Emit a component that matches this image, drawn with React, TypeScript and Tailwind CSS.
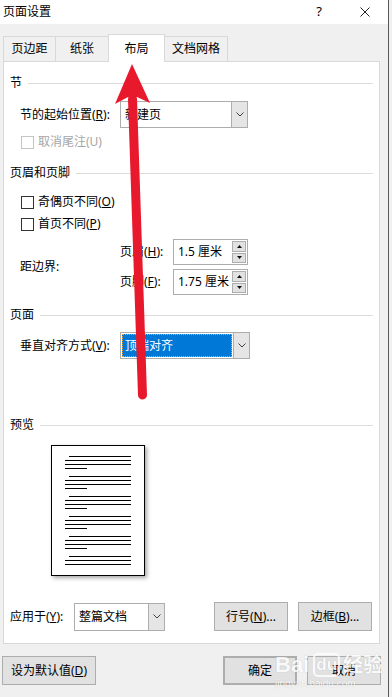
import type { ReactNode } from "react";

const font = "font-['Noto_Sans','Noto_Sans_CJK_SC',sans-serif]";

function Chevron() {
  return (
    <svg width="8" height="5" viewBox="0 0 8 5" fill="none">
      <path d="M0.5 0.5 L4 4 L7.5 0.5" stroke="#404040" strokeWidth="1" />
    </svg>
  );
}

function Section({ title, className = "" }: { title: string; className?: string }) {
  return (
    <div className={`flex h-4 items-center gap-[6px] ${className}`}>
      <span className="text-[12px] leading-4">{title}</span>
      <div className="h-px flex-1 bg-[#dcdcdc]" />
    </div>
  );
}

function Select({
  value,
  className,
  highlight = false,
}: {
  value: string;
  className: string;
  highlight?: boolean;
}) {
  return (
    <div className={`flex border border-[#adadad] bg-white ${className}`}>
      <div className="flex flex-1 items-stretch p-px">
        {highlight ? (
          <div className="flex flex-1 items-center border border-dotted border-[#f5a623] bg-[#0078d7] pl-[2px] text-[12px] text-white">
            {value}
          </div>
        ) : (
          <div className="flex flex-1 items-center pl-[3px] text-[12px]">{value}</div>
        )}
      </div>
      <div className="flex w-[16px] items-center justify-center border-l border-[#adadad] bg-[#e5e5e5]">
        <Chevron />
      </div>
    </div>
  );
}

function Spin({ value }: { value: string }) {
  return (
    <div className="flex h-[26px] w-[75px] border border-[#adadad] bg-white">
      <div className="flex flex-1 items-center pl-[4px] text-[12px]">{value}</div>
      <div className="flex w-[15px] flex-col gap-px py-px pr-px">
        <div className="flex flex-1 items-center justify-center border border-[#adadad] bg-[#e1e1e1]">
          <svg width="5" height="3" viewBox="0 0 5 3">
            <path d="M2.5 0 L5 3 L0 3 Z" fill="#111" />
          </svg>
        </div>
        <div className="flex flex-1 items-center justify-center border border-[#adadad] bg-[#e1e1e1]">
          <svg width="5" height="3" viewBox="0 0 5 3">
            <path d="M0 0 L5 0 L2.5 3 Z" fill="#111" />
          </svg>
        </div>
      </div>
    </div>
  );
}

function Check({ label, disabled = false }: { label: ReactNode; disabled?: boolean }) {
  return (
    <div className="ml-[11px] flex h-4 items-center gap-[4px]">
      <div
        className={`h-[13px] w-[13px] border bg-white ${disabled ? "border-[#c4c4c4]" : "border-[#333]"}`}
      />
      <span className={`text-[12px] leading-4 ${disabled ? "text-[#a6a6a6]" : ""}`}>{label}</span>
    </div>
  );
}

function Button({ children, className = "" }: { children: ReactNode; className?: string }) {
  return (
    <div
      className={`flex h-[29px] items-center justify-center border border-[#adadad] bg-[#e1e1e1] text-[12px] ${className}`}
    >
      {children}
    </div>
  );
}

function PreviewPage() {
  const groups = [4, 4, 4, 4, 4, 3];
  return (
    <div className="ml-[41px] mt-[12px] h-[131px] w-[94px] border border-black bg-white pl-[13px] pt-[10px] shadow-[2px_2px_4px_rgba(0,0,0,0.35)]">
      <div className="flex flex-col gap-[7px]">
        {groups.map((n, g) => (
          <div key={g} className="flex flex-col gap-[3px]">
            <div className="ml-[4px] h-px w-[62px] bg-black" />
            <div className="h-px w-[66px] bg-black" />
            <div className="h-px w-[66px] bg-black" />
            {n === 4 && <div className="h-px w-[22px] bg-black" />}
          </div>
        ))}
      </div>
    </div>
  );
}

export default function App() {
  return (
    <div className={`relative flex h-[697px] w-[392px] overflow-hidden bg-[#f0f0f0] text-black ${font}`}>
      <div className="flex w-[389px] flex-col border-r border-[#5a5a5a]">
        {/* Title bar */}
        <div className="flex h-[24px] items-center bg-white pl-[3px] text-[12px]">
          <span>页面设置</span>
          <span className="ml-auto mr-[38px] text-[13px]">?</span>
          <svg className="mr-[18px]" width="10" height="10" viewBox="0 0 10 10">
            <path d="M0.5 0.5 L9.5 9.5 M9.5 0.5 L0.5 9.5" stroke="#222" strokeWidth="1" />
          </svg>
        </div>

        {/* Tabs */}
        <div className="ml-[3px] mt-[10px] flex h-[27px] items-end text-[12px]">
          <div className="flex h-[25px] w-[52px] items-center justify-center border-l border-t border-[#d9d9d9]">页边距</div>
          <div className="flex h-[25px] w-[53px] items-center justify-center border-l border-t border-[#d9d9d9]">纸张</div>
          <div className="relative z-10 -mb-px flex h-[28px] w-[57px] items-center justify-center border-x border-t border-[#d9d9d9] bg-white">
            布局
          </div>
          <div className="flex h-[25px] w-[63px] items-center justify-center border-r border-t border-[#d9d9d9]">文档网格</div>
        </div>

        {/* Panel */}
        <div className="ml-[3px] flex h-[583px] w-[377px] flex-col border border-[#d9d9d9] bg-white px-[6px]">
          <Section title="节" className="mt-[13px]" />
          <div className="ml-[10px] mt-[10px] flex items-center">
            <span className="w-[100px] text-[12px]">
              节的起始位置(<u>R</u>):
            </span>
            <Select value="新建页" className="h-[27px] w-[128px]" />
          </div>
          <div className="mt-[6px]">
            <Check label="取消尾注(U)" disabled />
          </div>

          <Section title="页眉和页脚" className="mt-[15px]" />
          <div className="mt-[13px]">
            <Check
              label={
                <>
                  奇偶页不同(<u>O</u>)
                </>
              }
            />
          </div>
          <div className="mt-[6px]">
            <Check
              label={
                <>
                  首页不同(<u>P</u>)
                </>
              }
            />
          </div>
          <div className="ml-[10px] mt-[7px] flex items-center">
            <span className="w-[100px] text-[12px]">距边界:</span>
            <div className="flex flex-col gap-[4px]">
              <div className="flex items-center">
                <span className="w-[53px] text-[12px]">
                  页眉(<u>H</u>):
                </span>
                <Spin value="1.5 厘米" />
              </div>
              <div className="flex items-center">
                <span className="w-[53px] text-[12px]">
                  页脚(<u>F</u>):
                </span>
                <Spin value="1.75 厘米" />
              </div>
            </div>
          </div>

          <Section title="页面" className="mt-[12px]" />
          <div className="ml-[10px] mt-[9px] flex items-center">
            <span className="w-[100px] text-[12px]">
              垂直对齐方式(<u>V</u>):
            </span>
            <Select value="顶端对齐" className="h-[27px] w-[130px]" highlight />
          </div>

          <Section title="预览" className="mt-[58px]" />
          <PreviewPage />

          <div className="mb-[12px] mt-auto flex items-center">
            <span className="w-[64px] text-[12px]">
              应用于(<u>Y</u>):
            </span>
            <Select value="整篇文档" className="h-[28px] w-[91px]" />
            <Button className="ml-[49px] w-[74px]">
              行号(<u>N</u>)...
            </Button>
            <Button className="ml-[10px] w-[74px]">
              边框(<u>B</u>)...
            </Button>
          </div>
        </div>

        {/* Footer */}
        <div className="mt-[12px] flex items-center pr-[7px]">
          <Button className="ml-[2px] w-[94px]">
            设为默认值(<u>D</u>)
          </Button>
          <Button className="ml-auto w-[74px] border-2 border-[#0078d7]">确定</Button>
          <Button className="ml-[10px] w-[74px]">取消</Button>
        </div>
      </div>

      {/* Baidu watermark */}
      <div className="pointer-events-none absolute left-[275px] top-[652px] flex flex-col items-start text-white opacity-80 [text-shadow:0_0_1px_rgba(0,0,0,0.25)]">
        <div className="flex items-center text-[22px] font-bold leading-[26px]">
          <span className="font-['Liberation_Sans',sans-serif]">Bai</span>
          <span className="ml-[4px] rounded-[5px] border-2 border-white px-[1px] text-[17px] leading-[20px] font-['Liberation_Sans',sans-serif]">du</span>
          <span className="ml-[3px] text-[20px]">经验</span>
        </div>
        <span className="text-[10px] leading-[12px] font-['Liberation_Sans',sans-serif]">jingyan.baidu.com</span>
      </div>

      {/* Red annotation arrow */}
      <svg className="pointer-events-none absolute left-0 top-0" width="392" height="697" viewBox="0 0 392 697">
        <path d="M132.5 99 L142.5 395" stroke="#e8192c" strokeWidth="9" strokeLinecap="round" />
        <path d="M132 64 L150 103 L137 97 L128 97 L115 104 Z" fill="#e8192c" />
      </svg>
    </div>
  );
}
